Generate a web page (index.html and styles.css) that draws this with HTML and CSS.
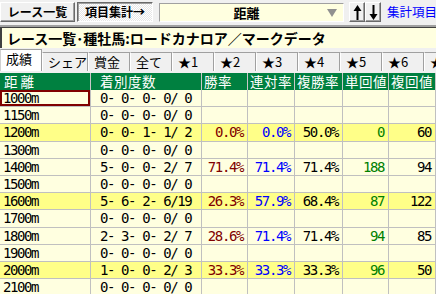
FILE: index.html
```html
<!DOCTYPE html>
<html lang="ja">
<head>
    <meta charset="UTF-8">
    <meta name="viewport" content="width=device-width, initial-scale=1.0">
    <title>集計</title>
    <link rel="stylesheet" href="styles.css">
</head>
<body>
    <div class="toolbar">
        <div class="btn btn-list">レース一覧</div>
        <div class="btn btn-pressed">項目集計→</div>
        <div class="combo">
            <span class="combo-text">距離</span>
            <span class="combo-arrow"></span>
        </div>
        <div class="arrows">
            <div class="btn btn-arrow">
                <svg width="9" height="15" viewBox="0 0 9 15"><path d="M4.5 0 L0.5 6 H3.5 V15 H5.5 V6 H8.5 Z" fill="#000"/></svg>
            </div>
            <div class="btn btn-arrow">
                <svg width="9" height="15" viewBox="0 0 9 15"><path d="M4.5 15 L0.5 9 H3.5 V0 H5.5 V9 H8.5 Z" fill="#000"/></svg>
            </div>
        </div>
        <div class="link">集計項目...</div>
    </div>

    <div class="title">レース一覧･種牡馬:ロードカナロア／マークデータ</div>

    <div class="tabs">
        <div class="tab active">成績</div>
        <div class="tab">シェア</div>
        <div class="tab">賞金</div>
        <div class="tab">全て</div>
        <div class="tab">★1</div>
        <div class="tab">★2</div>
        <div class="tab">★3</div>
        <div class="tab">★4</div>
        <div class="tab">★5</div>
        <div class="tab">★6</div>
        <div class="tab">★7</div>
    </div>

    <div class="grid">
        <div class="row head">
            <div class="cell dist-head">距離</div>
            <div class="cell count-head">着別度数</div>
            <div class="cell">勝率</div>
            <div class="cell">連対率</div>
            <div class="cell">複勝率</div>
            <div class="cell">単回値</div>
            <div class="cell">複回値</div>
        </div>

        <div class="row">
            <div class="cell dist focus">1000m</div>
            <div class="cell count">0- 0- 0- 0/ 0</div>
            <div class="cell"></div><div class="cell"></div><div class="cell"></div><div class="cell"></div><div class="cell"></div>
        </div>
        <div class="row">
            <div class="cell dist">1150m</div>
            <div class="cell count">0- 0- 0- 0/ 0</div>
            <div class="cell"></div><div class="cell"></div><div class="cell"></div><div class="cell"></div><div class="cell"></div>
        </div>
        <div class="row hit">
            <div class="cell dist">1200m</div>
            <div class="cell count">0- 0- 1- 1/ 2</div>
            <div class="cell num win">0.0%</div>
            <div class="cell num place">0.0%</div>
            <div class="cell num">50.0%</div>
            <div class="cell num ret">0</div>
            <div class="cell num">60</div>
        </div>
        <div class="row">
            <div class="cell dist">1300m</div>
            <div class="cell count">0- 0- 0- 0/ 0</div>
            <div class="cell"></div><div class="cell"></div><div class="cell"></div><div class="cell"></div><div class="cell"></div>
        </div>
        <div class="row">
            <div class="cell dist">1400m</div>
            <div class="cell count">5- 0- 0- 2/ 7</div>
            <div class="cell num win">71.4%</div>
            <div class="cell num place">71.4%</div>
            <div class="cell num">71.4%</div>
            <div class="cell num ret">188</div>
            <div class="cell num">94</div>
        </div>
        <div class="row">
            <div class="cell dist">1500m</div>
            <div class="cell count">0- 0- 0- 0/ 0</div>
            <div class="cell"></div><div class="cell"></div><div class="cell"></div><div class="cell"></div><div class="cell"></div>
        </div>
        <div class="row hit">
            <div class="cell dist">1600m</div>
            <div class="cell count">5- 6- 2- 6/19</div>
            <div class="cell num win">26.3%</div>
            <div class="cell num place">57.9%</div>
            <div class="cell num">68.4%</div>
            <div class="cell num ret">87</div>
            <div class="cell num">122</div>
        </div>
        <div class="row">
            <div class="cell dist">1700m</div>
            <div class="cell count">0- 0- 0- 0/ 0</div>
            <div class="cell"></div><div class="cell"></div><div class="cell"></div><div class="cell"></div><div class="cell"></div>
        </div>
        <div class="row">
            <div class="cell dist">1800m</div>
            <div class="cell count">2- 3- 0- 2/ 7</div>
            <div class="cell num win">28.6%</div>
            <div class="cell num place">71.4%</div>
            <div class="cell num">71.4%</div>
            <div class="cell num ret">94</div>
            <div class="cell num">85</div>
        </div>
        <div class="row">
            <div class="cell dist">1900m</div>
            <div class="cell count">0- 0- 0- 0/ 0</div>
            <div class="cell"></div><div class="cell"></div><div class="cell"></div><div class="cell"></div><div class="cell"></div>
        </div>
        <div class="row hit">
            <div class="cell dist">2000m</div>
            <div class="cell count">1- 0- 0- 2/ 3</div>
            <div class="cell num win">33.3%</div>
            <div class="cell num place">33.3%</div>
            <div class="cell num">33.3%</div>
            <div class="cell num ret">96</div>
            <div class="cell num">50</div>
        </div>
        <div class="row">
            <div class="cell dist">2100m</div>
            <div class="cell count">0- 0- 0- 0/ 0</div>
            <div class="cell"></div><div class="cell"></div><div class="cell"></div><div class="cell"></div><div class="cell"></div>
        </div>
    </div>
</body>
</html>
```

FILE: styles.css
```css
body {
    margin: 0;
    width: 436px;
    height: 294px;
    overflow: hidden;
    background-color: #f0f0f0;
    font-family: "Noto Sans CJK JP", sans-serif;
    color: #000;
}

/* top toolbar */
.toolbar {
    display: flex;
    align-items: flex-start;
    height: 27px;
    padding-top: 2px;
    box-sizing: border-box;
    border-bottom: 2px solid #a0a0a0;
    white-space: nowrap;
    overflow: hidden;
}

.toolbar > * {
    flex-shrink: 0;
}

.btn {
    display: flex;
    align-items: center;
    justify-content: center;
    height: 20px;
    box-sizing: border-box;
    border: 1px solid;
    border-color: #fff #696969 #696969 #fff;
    box-shadow: inset -1px -1px #a0a0a0;
    background-color: #f0f0f0;
    font-size: 12px;
    font-weight: bold;
    line-height: 18px;
}

.btn-list {
    width: 75px;
}

.btn-pressed {
    width: 76px;
    margin-left: 2px;
    border-color: #696969 #fff #fff #696969;
    box-shadow: inset 1px 1px #a0a0a0;
    background-image: repeating-conic-gradient(#fff 0 25%, #e6e6e6 0 50%);
    background-size: 2px 2px;
}

.combo {
    display: grid;
    grid-template-columns: 1fr 16px;
    align-items: center;
    width: 185px;
    height: 19px;
    margin-left: 6px;
    margin-top: 1px;
    box-sizing: border-box;
    border: 1px solid;
    border-color: #a0a0a0 #fff #fff #a0a0a0;
    background-color: #ffffe0;
}

.combo-text {
    text-align: center;
    font-size: 13px;
    font-weight: bold;
    line-height: 17px;
    padding-left: 6px;
}

.combo-arrow {
    width: 0;
    height: 0;
    border-left: 5px solid transparent;
    border-right: 5px solid transparent;
    border-top: 8px solid #909090;
}

.arrows {
    display: flex;
    margin-left: 5px;
}

.btn-arrow {
    width: 16px;
}

.link {
    margin-left: 6px;
    color: #0000ff;
    font-size: 12.5px;
    line-height: 20px;
}

/* caption */
.title {
    height: 21px;
    box-sizing: border-box;
    padding-left: 5px;
    border-top: 1px solid #404040;
    border-left: 2px solid #404040;
    background-color: #ffffe0;
    font-size: 14px;
    font-weight: bold;
    line-height: 20px;
    white-space: nowrap;
    overflow: hidden;
}

/* tab strip */
.tabs {
    display: flex;
    align-items: flex-end;
    height: 23px;
    box-sizing: border-box;
    padding-top: 1px;
    white-space: nowrap;
    overflow: hidden;
}

.tab {
    flex: 0 0 42px;
    height: 19px;
    box-sizing: border-box;
    padding-left: 5px;
    border: 1px solid #a0a0a0;
    border-bottom: none;
    border-left-color: #fff;
    background-color: #f0f0f0;
    font-size: 13px;
    line-height: 18px;
}

.tab.active {
    height: 22px;
    background-color: #fff;
    border-left-color: #d0d0d0;
}

/* data grid */
.grid {
    margin-top: 2px;
    background-color: #ffffe0;
}

.row {
    display: grid;
    grid-template-columns: 91px 111px 46px 47px 48px 46px 47px;
    height: 17.2px;
    box-sizing: border-box;
    border-bottom: 1px solid #c0c0c0;
}

.row.hit {
    background-color: #ffff88;
}

.cell {
    border-right: 1px solid #c0c0c0;
    font-family: "DejaVu Sans Mono", monospace;
    font-size: 14px;
    letter-spacing: -1.4px;
    line-height: 16px;
    white-space: pre;
    overflow: hidden;
}

.row.head {
    height: 17px;
    border-bottom: none;
    background-color: #008040;
    color: #fff;
}

.row.head .cell {
    padding-left: 2px;
    border-right-color: #c8c8c8;
    font-family: "Noto Sans CJK JP", sans-serif;
    font-size: 13.5px;
    letter-spacing: 0.5px;
    line-height: 17px;
}

.row.head .dist-head {
    padding-left: 4px;
    letter-spacing: 3px;
}

.row.head .count-head {
    padding-left: 9px;
}

.dist {
    padding-left: 3px;
    background-color: #ffffe0;
}

.row.hit .dist {
    background-color: #ffff88;
}

.dist.focus {
    box-shadow: inset 0 0 0 2px #800000;
}

.count {
    padding-left: 9px;
}

.num {
    text-align: right;
    padding-right: 4px;
}

.win {
    color: #800000;
}

.place {
    color: #0000ff;
}

.ret {
    color: #008000;
}
```
